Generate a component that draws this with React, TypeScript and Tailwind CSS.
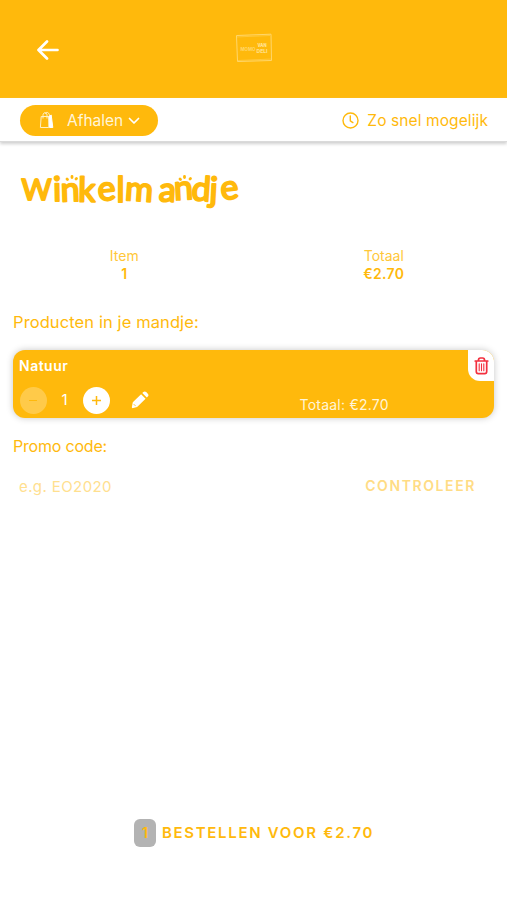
import React from 'react';

function ArrowIcon() {
  return (
    <svg width="22" height="20" viewBox="0 0 22 20" fill="none" stroke="white" strokeWidth="2.7" strokeLinecap="round" strokeLinejoin="round">
      <path d="M10 1.5 1.5 10 10 18.5M2 10h18.5" />
    </svg>
  );
}

function Logo() {
  return (
    <svg width="38" height="30" viewBox="0 0 38 30" fill="none" stroke="#ffdf83" strokeWidth="1" className="opacity-80">
      <path d="M1.5 2.5 36 1.2 36.5 27.5 2.5 28.5Z" />
      <path d="M1 4 35 2.5M3 27.5 37 26" strokeWidth=".5" />
      <text x="5.5" y="17.5" fontSize="5" fontWeight="700" textLength="15" lengthAdjust="spacingAndGlyphs" fill="#ffdf83" stroke="none">MOMO</text>
      <text x="22.5" y="14" fontSize="5" fontWeight="800" textLength="9" lengthAdjust="spacingAndGlyphs" fill="#fff0bf" stroke="none">VAN</text>
      <text x="21.5" y="19.5" fontSize="5" fontWeight="800" textLength="11" lengthAdjust="spacingAndGlyphs" fill="#ffe9a5" stroke="none">DELI</text>
    </svg>
  );
}

function BagIcon() {
  return (
    <svg width="16" height="18" viewBox="0 0 16 18" fill="none" stroke="#fff0c4" strokeWidth="1">
      <path d="M2.2 5.5h7.6v11H1.4z" />
      <path d="M10 5.5 12.2 4l1.6 12.5H10.5z" fill="white" stroke="white" />
      <path d="M4 7.5V4.2C4 .8 8 .8 8 4.2v3.3M6 3C7 .2 10.3 1 10.6 5" />
    </svg>
  );
}

function Title() {
  return (
    <svg width="230" height="50" viewBox="15 165 230 50" role="img" className="overflow-visible">
      <text
        className="font-[Lato,sans-serif] font-normal"
        fill="#ffb90c"
        stroke="#ffb90c"
        strokeWidth="2"
        strokeLinejoin="round"
        strokeLinecap="round"
      >
        <tspan x="21.5" y="200" className="text-[29px]">W</tspan>
        <tspan
          x="53.2 61 78 98.5 116.5 124.5 158.5 174.5 191 209 221.5"
          y="201 201.5 201.5 201 202 200 201 200 200 201 200"
          rotate="-1 -2 1 -5 0 4 3 -3 4 3 -6"
          className="text-[34px]"
        >
          inkelmandje
        </tspan>
      </text>
      <g stroke="#ffb90c" strokeWidth="2.8" strokeLinecap="round">
        <path d="m67 179 .5.5M72 176.5v1M76.5 178.5l-.5.5M180 179l.5.5M184.5 176.5v1M190.5 178.5l-.5.5" />
      </g>
    </svg>
  );
}

function PencilIcon() {
  return (
    <svg width="18" height="18" viewBox="0 0 18 18" fill="white">
      <path d="M.9 15.8 1.8 11.2 10.1 3.2 14.6 7.7 6.1 15.9 2.2 17.1C1.2 17.3.7 16.8.9 15.8Z" />
      <path d="m11.3 2.1 1-1c.9-.9 2-.9 2.9 0l1.6 1.6c.9.9.9 2 0 2.9l-1 1Z" />
      <path d="m2.7 13.1 2 2" stroke="#ffb90c" strokeWidth=".8" />
    </svg>
  );
}

function TrashIcon() {
  return (
    <svg width="15" height="18" viewBox="0 0 15 18" fill="none" stroke="#f3303f" strokeWidth="1.7" strokeLinecap="round" strokeLinejoin="round">
      <path d="M1.2 4h12.6M4.4 3.6C4.4 2 5.3 1 6.4 1h2.2c1.1 0 2 1 2 2.6M2.3 4.3v10.2c0 1.2.8 2.1 2 2.1h6.4c1.2 0 2-.9 2-2.1V4.3" />
      <path d="M5.2 6.8v7M7.5 6.8v7M9.8 6.8v7" strokeWidth="1.1" />
    </svg>
  );
}

function App() {
  return (
    <div className="flex h-[900px] w-[507px] flex-col overflow-hidden bg-white font-[Inter,sans-serif] text-[#ffb90c]">
      <header className="grid h-[98px] shrink-0 grid-cols-3 items-center bg-[#ffb90c]">
        <div className="pl-[37px] pt-px">
          <ArrowIcon />
        </div>
        <div className="flex justify-center pb-0.5">
          <Logo />
        </div>
      </header>

      <div className="flex h-11 shrink-0 items-center justify-between border-b border-[#dadada] pl-5 pr-[19px] pt-px shadow-[0_2px_3px_#d0d0d0]">
        <button className="flex h-[31px] w-[138px] items-center rounded-full bg-[#ffb90c] pl-[19px] text-[15.5px] text-[#fff5d8]">
          <BagIcon />
          <span className="ml-3 pt-px">Afhalen</span>
          <svg width="12" height="8" viewBox="0 0 12 8" className="ml-[5px] mt-px" fill="none" stroke="white" strokeWidth="1.7" strokeLinecap="round" strokeLinejoin="round">
            <path d="m1.5 1.5 4.5 4.5 4.5-4.5" />
          </svg>
        </button>
        <div className="flex items-center gap-2 text-[15.5px] tracking-[0.1px]">
          <svg width="17" height="17" viewBox="0 0 17 17" fill="none" stroke="#ffb90c" strokeWidth="1.4" strokeLinecap="round">
            <circle cx="8.5" cy="8.5" r="7.5" />
            <path d="M8.3 4v4.8l2.6 1.8" />
          </svg>
          <span className="pt-0.5">Zo snel mogelijk</span>
        </div>
      </div>

      <main className="flex flex-1 flex-col">
        <h1 className="mt-[23px] h-[50px] pl-[15px]">
          <Title />
        </h1>

        <div className="mt-8 grid grid-cols-2 text-center text-sm leading-[18px]">
          <div className="pr-[5px]">
            <div className="text-[#ffc738]">Item</div>
            <div className="font-semibold">1</div>
          </div>
          <div className="pl-[7px]">
            <div className="text-[#ffc738]">Totaal</div>
            <div className="font-semibold tracking-[0.3px]">€2.70</div>
          </div>
        </div>

        <h2 className="mt-[27px] pl-[13px] text-[16.5px] leading-6 tracking-[0.1px]">Producten in je mandje:</h2>

        <section className="mx-[13px] mt-4 flex h-[68px] flex-col rounded-xl bg-[#ffb90c] text-white shadow-[0_0_7px_rgba(0,0,0,0.22)]">
          <div className="flex h-8 justify-between">
            <span className="pl-[6px] pt-1.5 text-sm font-semibold leading-5 tracking-[0.5px]">Natuur</span>
            <span className="flex h-[31px] w-[26px] items-center justify-center rounded-bl-xl rounded-tr-xl bg-white">
              <TrashIcon />
            </span>
          </div>
          <div className="flex h-9 items-center pl-[6.5px]">
            <button className="flex size-[27px] items-center justify-center rounded-full bg-white/25">
              <span className="h-px w-2 bg-[#ffb90c]" />
            </button>
            <span className="w-9 text-center text-[15px]">1</span>
            <button className="flex size-[27px] items-center justify-center rounded-full bg-white">
              <svg width="9" height="9" viewBox="0 0 9 9" stroke="#ffb90c" strokeWidth="1.5">
                <path d="M4.5 0v9M0 4.5h9" />
              </svg>
            </button>
            <span className="ml-[21px]">
              <PencilIcon />
            </span>
            <span className="ml-[151px] mt-[10px] text-sm tracking-[0.23px] text-[#fff5d8]">Totaal: €2.70</span>
          </div>
        </section>

        <h2 className="mt-4 pl-[13px] text-base leading-6 -tracking-[0.2px]">Promo code:</h2>
        <div className="mt-4 flex h-6 items-center justify-between pl-[19px] pr-[31px]">
          <span className="pt-0.5 text-[15px] tracking-[0.4px] text-[#ffe08f]">e.g. EO2020</span>
          <span className="text-sm font-semibold tracking-[1.6px] text-[#ffdc85]">CONTROLEER</span>
        </div>
      </main>

      <footer className="mb-[53px] flex h-7 shrink-0 items-center justify-center pl-px text-[15px] font-semibold">
        <span className="mr-1.5 flex h-7 w-[22px] items-center justify-center rounded-md bg-[#b3b3b3]">1</span>
        <span className="pt-px tracking-[1.7px]">BESTELLEN VOOR €2.70</span>
      </footer>
    </div>
  );
}

export default App;
